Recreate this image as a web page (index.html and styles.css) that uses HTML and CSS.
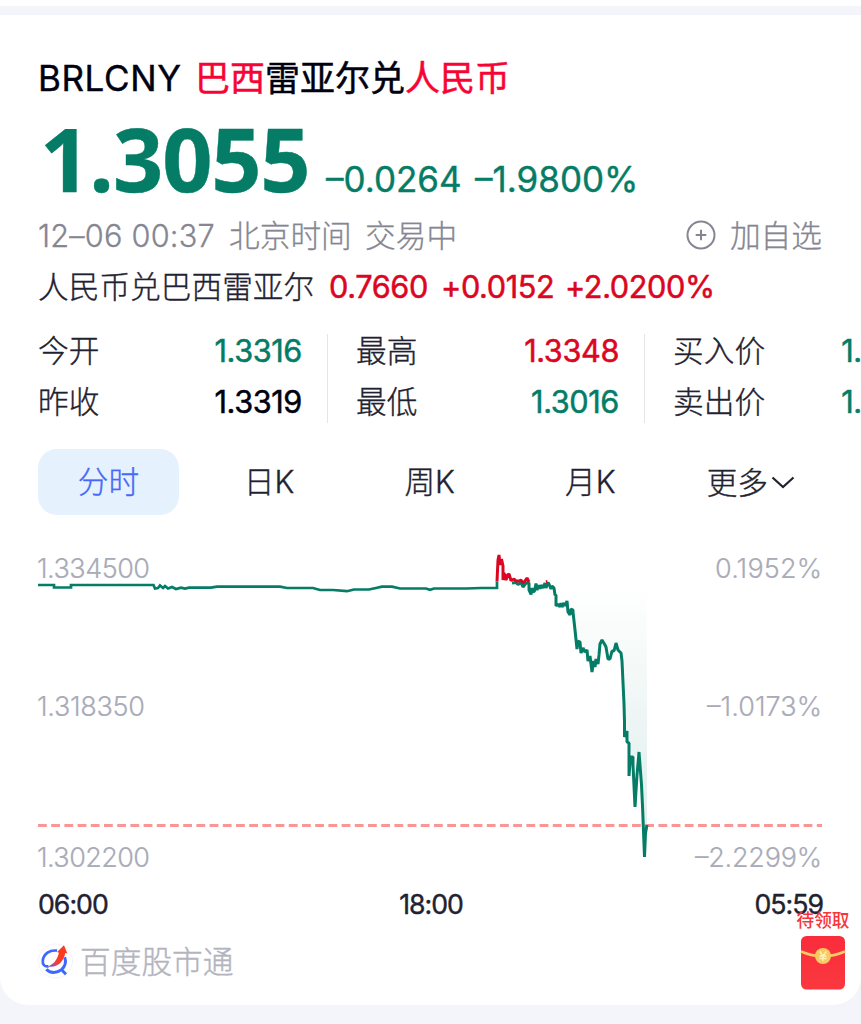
FILE: index.html
```html
<!DOCTYPE html>
<html lang="zh-CN">
<head>
<meta charset="utf-8">
<title>BRLCNY 巴西雷亚尔兑人民币</title>
<link rel="stylesheet" href="styles.css">
</head>
<body>
<div class="previous"></div>
<main class="card">
  <h1 class="title"><span class="code">BRLCNY</span><span class="pair"><em>巴西</em>雷亚尔兑<em>人民币</em></span></h1>
  <div class="price"><strong>1.3055</strong><span class="delta">–0.0264</span><span class="percent">–1.9800%</span></div>
  <div class="status">
    <span class="date">12–06 00:37</span><span class="zone">北京时间</span><span>交易中</span>
    <span class="add"><svg width="30" height="30" viewBox="0 0 30 30"><circle cx="15" cy="15" r="13.5"/><path d="M15 9.7v10.6M9.7 15h10.6"/></svg>加自选</span>
  </div>
  <div class="reverse"><span class="name">人民币兑巴西雷亚尔</span><span class="num r1">0.7660</span><span class="num r2">+0.0152</span><span class="num r3">+2.0200%</span></div>
  <section class="stats">
    <dl><dt>今开</dt><dd class="green">1.3316</dd><dt>昨收</dt><dd>1.3319</dd></dl>
    <dl><dt>最高</dt><dd class="red">1.3348</dd><dt>最低</dt><dd class="green">1.3016</dd></dl>
    <dl><dt>买入价</dt><dd class="green">1.3055</dd><dt>卖出价</dt><dd class="green">1.3055</dd></dl>
  </section>
  <nav class="tabs">
    <span class="tab active">分时</span><span class="tab">日K</span><span class="tab">周K</span><span class="tab">月K</span>
    <span class="tab more">更多<svg width="24" height="16" viewBox="0 0 24 16"><path d="M1.500 3.500L12 13L22.500 3.500"/></svg></span>
  </nav>
  <svg class="chart" width="861" height="350" viewBox="0 530 861 350">
    <defs>
      <linearGradient id="fall" gradientUnits="userSpaceOnUse" x1="0" y1="585" x2="0" y2="830">
        <stop offset="0" stop-color="#047c66" stop-opacity="0"/><stop offset="1" stop-color="#047c66" stop-opacity=".13"/>
      </linearGradient>
    </defs>
    <path fill="url(#fall)" d="M529 582L548 584L555 600L573 612L578 649L592 668L601 643L609 659L617 646L622 660L627 737L633 760L639 752L644 830H647V585Z"/>
    <g class="axis">
      <text x="37" y="578" textLength="113">1.334500</text>
      <text x="37" y="715.5" textLength="108">1.318350</text>
      <text x="37" y="867" textLength="113">1.302200</text>
      <text x="715" y="578" textLength="107">0.1952%</text>
      <text x="707" y="715.5" textLength="115">–1.0173%</text>
      <text x="695" y="867" textLength="127">–2.2299%</text>
    </g>
    <path class="last" d="M38 825.4H822"/>
    <path class="line" d="M38 585H54V587.5H71V585H153.500L155 588.500L158 588L160 585.500L163 588L165 586L168 588.500L172 587L176 589L181 587.700L185 588.500L189 587.700H211L217 586.700H280L287 588H313L320 590H333L347 591.200L354 589.500H369L376 588L382 586.700H392L400 588.500H426L430 589.800L434 588.500H466L481 588L497 587.800V581.500"/>
    <path class="line dense" d="M512 583L516 582.500L518 584.500L521 582.500L523 587L526 583H529V590L531 594.500L532 588L533 592L534.500 591L536 583.500L537 590L539 585L540 589L541 585L543 588L545 583L546 588L548 582.500L549 584L551 589L552 586L554 588L555 595H556V606L558 604L560 607L561 603L562 607L564 603L565 606L567 601L568 612L570 615L571 609L573 610V612L575 630L577 649L578 641L580 642L581 653L583 648L585 652L587 650L588 661L590 656L592 672L593.500 661L595 667L596 659L598 664L599 655L600 644L602 640L605 645L606 647L608 659L610 659L612 651L614 651L616 643L618 650L621 653L622 661L624 704L624.500 722V737L627 731V742L629 743V776L630.500 757L633 757V765L635 807L637 775L639 752L640 765L641.500 785L642.500 806L644.500 857L645.500 833L647 825"/>
    <path class="line dense rise" d="M497 581.500L498 560L499 555L500 565L501.500 559L503 566V580L504 573L506 580L507.500 575L509 574L511 580.500L514 579L516 581H519L521 580L523 583L525 581L527 578L529 582M546 582L547.500 581.500"/>
  </svg>
  <div class="times"><span>06:00</span><span>18:00</span><span>05:59</span></div>
  <footer class="brand">
    <svg width="36" height="36" viewBox="0 0 36 36">
      <defs><linearGradient id="arrow" x1="0" y1="1" x2="1" y2="0"><stop offset="0" stop-color="#4c60f5"/><stop offset=".3" stop-color="#e4454b"/><stop offset=".5" stop-color="#fb3b20"/></linearGradient></defs>
      <circle cx="17.500" cy="18" r="17" fill="#fff" stroke="#f3f3f6"/>
      <path d="M19 7.700C12 6.500 5.500 11 4.800 17.500C4.300 21.500 6.500 24 10.500 23.300" fill="none" stroke="#3c68ff" stroke-width="2.700"/>
      <path d="M8.300 26.300C12 30.500 19 30.300 23.500 26.600C27.500 23 28 18 26.700 14.200M23.500 26.800L28 31.300" fill="none" stroke="#3c68ff" stroke-width="3"/>
      <path d="M9.500 23.500C15.500 21.500 19 17 21 9.700L19 9L26 2.200L29.300 10.200L27.300 10C25.500 19 19 25.500 9.500 23.500Z" fill="url(#arrow)"/>
    </svg>
    <span>百度股市通</span>
  </footer>
  <aside class="reward">
    <b>待领取</b>
    <svg width="46" height="56" viewBox="0 0 46 56">
      <defs><linearGradient id="packet" x1="0" y1="0" x2="0" y2="1"><stop stop-color="#f92c3c"/><stop offset="1" stop-color="#fa383e"/></linearGradient></defs>
      <rect x="1" y="1" width="44" height="53.500" rx="5.500" fill="url(#packet)"/>
      <path d="M1 16.500Q23 26 45 16.500" fill="none" stroke="#f9c866" stroke-width="2.600"/>
      <circle cx="23" cy="21" r="8" fill="#f6ca62"/>
      <path d="M19.800 16.500L23 21L26.200 16.500M19.500 21H26.500M19.500 23.500H26.500M23 21V26" fill="none" stroke="#fff2b8" stroke-width="1.300"/>
    </svg>
  </aside>
</main>
</body>
</html>
```

FILE: styles.css
```css
* { box-sizing: border-box; }
body {
  margin: 0;
  width: 861px;
  height: 1024px;
  overflow: hidden;
  background: #f4f5fa;
  color: #1f2230;
  font-family: Inter, "Noto Sans CJK SC", sans-serif;
  font-size: 30.7px;
  white-space: nowrap;
}
.previous { height: 6px; margin-bottom: 9px; background: #fff; }
.card {
  position: relative;
  height: 990px;
  padding: 40px 0 0 38px;
  background: #fff;
  border-radius: 0 0 28px 28px;
  overflow: hidden;
  display: flex;
  flex-direction: column;
}
.title {
  display: flex;
  height: 47px;
  margin: 0;
  line-height: 47px;
  font-size: 35px;
  font-weight: 400;
  color: #000010;
}
.title em { color: #f70434; font-style: normal; }
.code { width: 157px; letter-spacing: .6px; -webkit-text-stroke: .4px; }
.pair { -webkit-text-stroke: .5px; }
.price {
  display: flex;
  align-items: baseline;
  height: 109px;
  padding-top: 1px;
  line-height: 110px;
  color: #047c66;
  font-size: 35px;
  font-weight: 400;
  -webkit-text-stroke: .4px;
}
.price strong {
  width: 288px;
  padding-left: 2px;
  font-family: "Open Sans", sans-serif;
  font-size: 88px;
  font-weight: 700;
  letter-spacing: -1.2px;
}
.delta { width: 149px; }
.status { display: flex; height: 50px; line-height: 50px; font-weight: 300; color: #858692; -webkit-text-stroke: .3px; }
.date { width: 191px; letter-spacing: .2px; }
.zone { width: 136px; }
.add { display: flex; align-items: center; gap: 14px; margin-left: auto; margin-right: 39px; }
.add svg { margin-bottom: 3px; fill: none; stroke: #858692; stroke-width: 2; }
.reverse { display: flex; height: 52px; line-height: 52px; }
.name, dt, .tab { font-weight: 300; -webkit-text-stroke: .35px; }
.name { width: 291px; }
.num, dd { font-weight: 400; letter-spacing: -.4px; -webkit-text-stroke: .5px; }
.num { color: #db0622; }
.r1 { width: 112px; }
.r2 { width: 124px; }
.stats { display: flex; height: 89px; margin-top: 21px; }
dl {
  display: grid;
  grid-template-columns: 1fr auto;
  grid-template-rows: 51px 51px;
  flex: none;
  width: 290px;
  height: 89px;
  margin: 0;
  padding-right: 25px;
  border-right: 1px solid #e5e6ea;
  line-height: 33px;
}
dl + dl { width: 317px; padding-left: 28px; }
dl:last-child { width: 318px; padding-right: 28px; border: 0; }
dt { height: 34px; }
dd { margin: 0; color: #000010; text-align: right; }
.green { color: #047c66; }
.red { color: #db0622; }
.tabs { display: flex; gap: 19.6px; height: 66px; margin-top: 26px; }
.tab {
  display: flex;
  justify-content: center;
  align-items: center;
  width: 141px;
  height: 66px;
  padding-bottom: 6px;
  border-radius: 19px;
}
.active { background: #e6f1fe; color: #4668f8; }
.more { padding-bottom: 4px; }
.more svg { margin: 3px 0 0 3px; fill: none; stroke: #1f2230; stroke-width: 2.2; }
.chart { display: block; flex: none; margin: 15px 0 0 -38px; }
.axis { font-size: 27px; font-weight: 300; fill: #a9abb7; stroke: #a9abb7; stroke-width: .2px; }
.line { fill: none; stroke: #047c66; stroke-width: 2.7; stroke-linejoin: miter; }
.dense { stroke-width: 3; stroke-linejoin: bevel; }
.rise { stroke: #db0622; }
.last { stroke: #f99797; stroke-width: 3; stroke-dasharray: 8.8 4.4; }
.times {
  display: flex;
  justify-content: space-between;
  height: 48px;
  padding-right: 38px;
  line-height: 48px;
  font-size: 26.7px;
  font-weight: 400;
  letter-spacing: -1px;
  -webkit-text-stroke: .4px;
}
.brand { display: flex; align-items: center; gap: 6px; height: 65px; color: #b3b4be; font-weight: 300; -webkit-text-stroke: .4px; }
.brand span { margin-bottom: 2px; }
.reward {
  position: absolute;
  right: 6px;
  bottom: 14px;
  width: 64px;
  display: flex;
  flex-direction: column;
  align-items: center;
  color: #f9343b;
}
.reward b { height: 26px; line-height: 24px; font-size: 17.7px; font-weight: 500; }
```
